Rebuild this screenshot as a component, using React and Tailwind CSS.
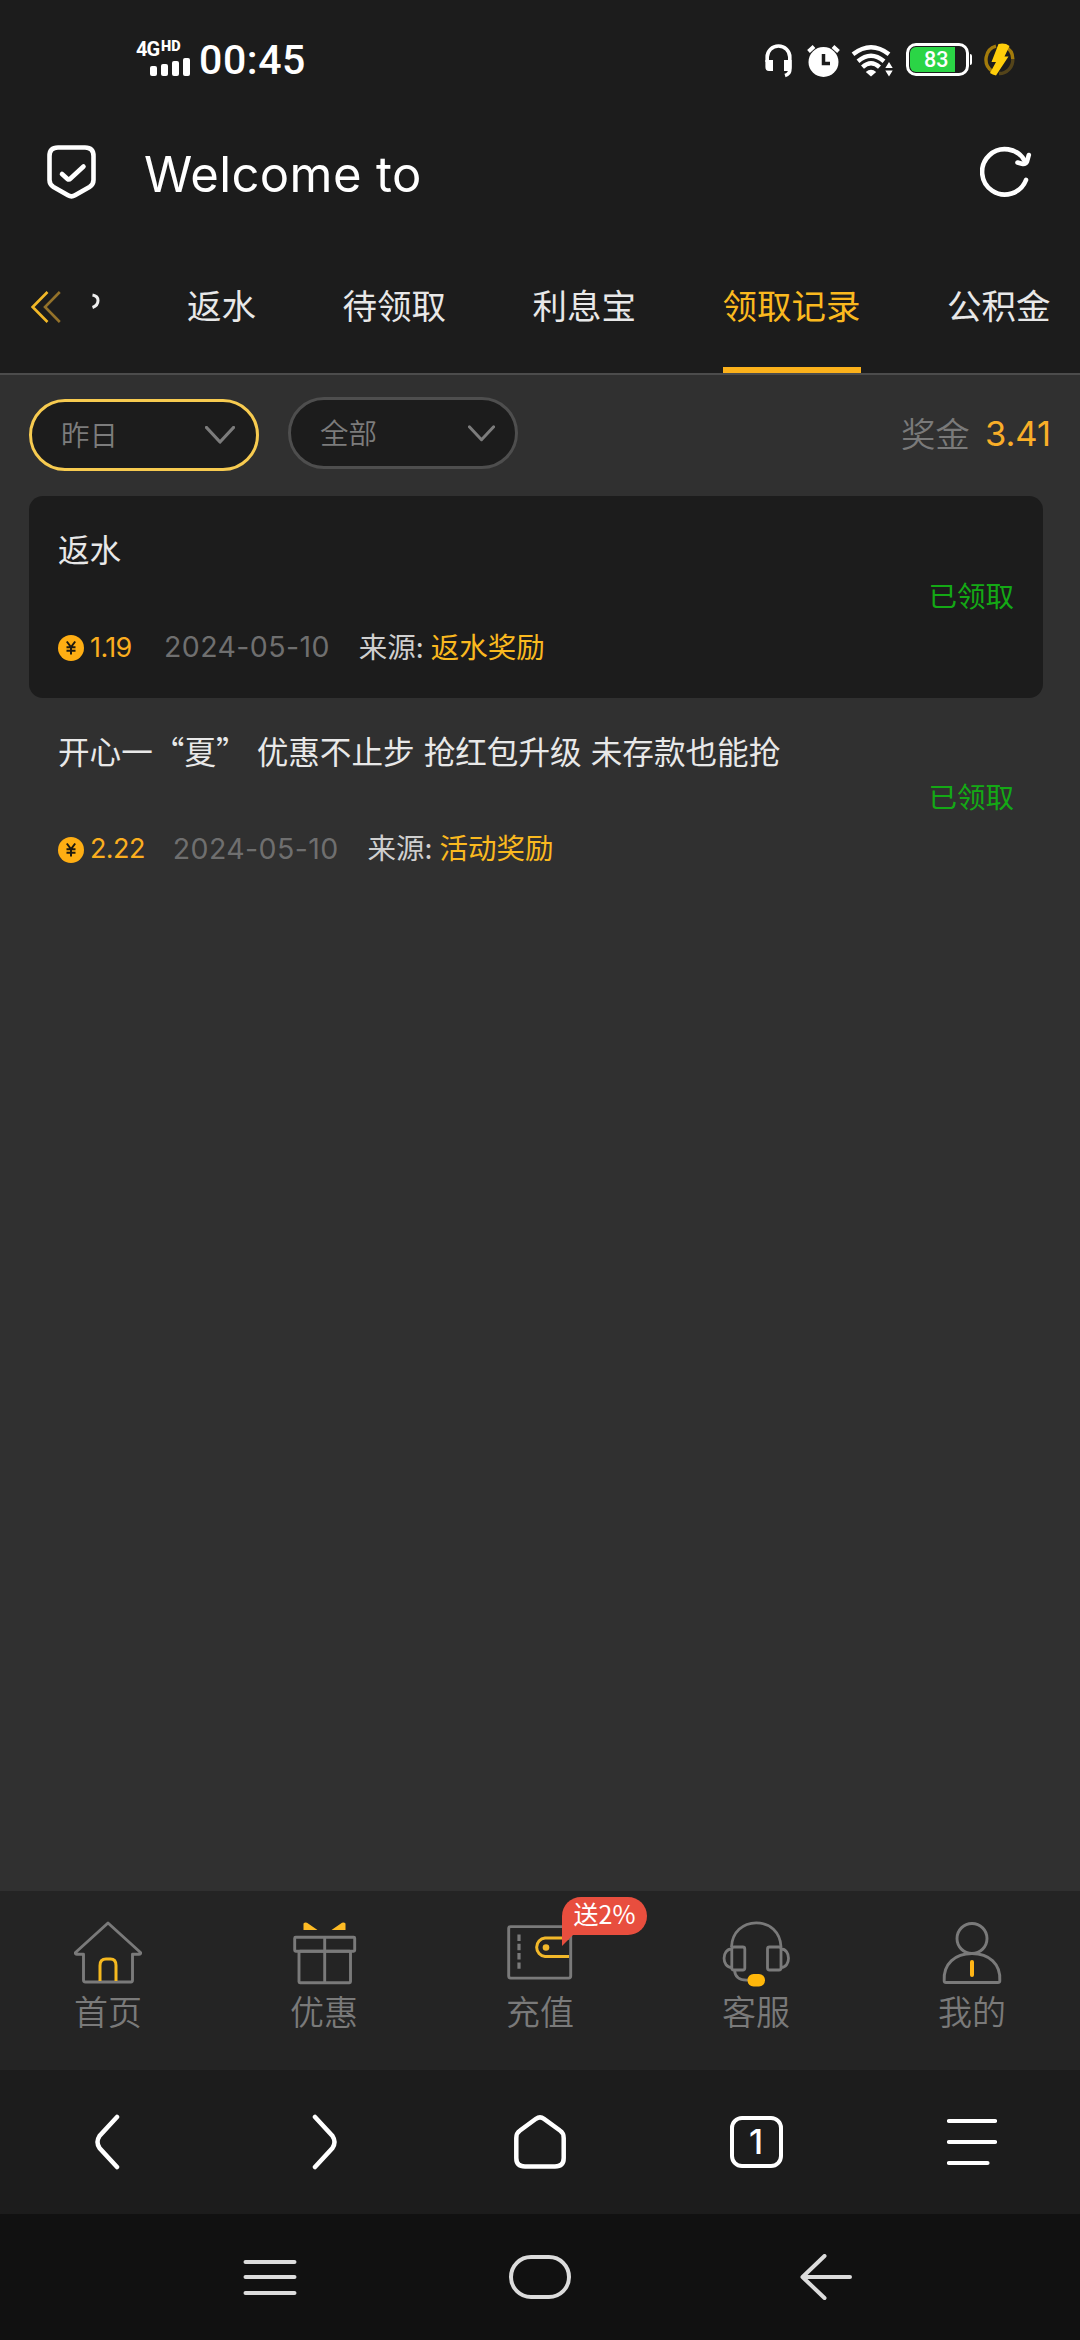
import React, { useState } from 'react';

const styles = {
  cjk: "font-['Noto_Sans_CJK_SC','Noto_Sans',sans-serif]",
  latin: "font-['Inter','Noto_Sans_CJK_SC',sans-serif]",
  status: "font-['Roboto','Noto_Sans_CJK_SC',sans-serif]",
};

const abas = ['返水', '待领取', '利息宝', '领取记录', '公积金'];

const registros = [
  { id: 1, titulo: '返水', valor: '1.19', data: '2024-05-10', origem: '返水奖励', status: '已领取' },
  { id: 2, titulo: '开心一“夏” 优惠不止步 抢红包升级 未存款也能抢', valor: '2.22', data: '2024-05-10', origem: '活动奖励', status: '已领取' },
];

function StatusBar() {
  return (
    <div className={`flex h-[120px] justify-between pl-[136px] pr-[65px] text-white ${styles.status}`}>
      <div className="flex pt-[42px]">
        <div className="w-[54px]">
          <div className="flex h-4 items-start font-bold">
            <span className="w-[25px] text-[20px] leading-[15px] tracking-[-1px]">4G</span>
            <span className="text-[14.5px] leading-[10px] font-black">HD</span>
          </div>
          <div className="flex items-end gap-1 pl-[14px]">
            <span className="h-[10px] w-[7px] rounded-xs bg-white" />
            <span className="h-[12px] w-[7px] rounded-xs bg-white" />
            <span className="h-[15px] w-[7px] rounded-xs bg-white" />
            <span className="h-[18px] w-[7px] rounded-xs bg-white" />
          </div>
        </div>
        <span className="pl-[9px] text-[41px] leading-[37px] font-medium tracking-[0.6px]">00:45</span>
      </div>

      <div className="flex items-start pt-[43px]">
        <svg className="mt-px h-[34px] w-[27px]" viewBox="0 0 27 34" fill="none">
          <path d="M2.2 18V13A11.3 11 0 0 1 24.8 13V26Q24.8 30 20 31.5" stroke="#fff" strokeWidth="3.6" />
          <path d="M.4 16H8V27H4Q.4 27 .4 23Z M19 16h7.6v7q0 4-3.6 4h-4z" fill="#fff" />
        </svg>
        <svg className="mt-[2px] ml-[15px] h-[32px] w-[33px]" viewBox="0 0 33 32" fill="none">
          <circle cx="16.5" cy="17" r="15" fill="#fff" />
          <path d="M1.5 6.5 7 1.5M31.5 6.5 26 1.5" stroke="#fff" strokeWidth="4" />
          <path d="M16.5 9v9.5h6.5" stroke="#1c1c1c" strokeWidth="3.5" />
        </svg>
        <svg className="mt-px ml-[11px] h-[33px] w-[43px]" viewBox="0 0 43 33" fill="none">
          <g stroke="#fff" strokeWidth="4.4">
            <path d="M2 10.2Q20 -3.8 38 10.2" />
            <path d="M7 17.2Q20 6.2 33 17.2" />
            <path d="M11.5 23.2Q20 15.4 28.5 23.2" />
          </g>
          <path d="M14.8 28Q20 23.6 25.2 28L20 32.4Z" fill="#fff" />
          <path d="M34.3 24 38 18l3.7 6zM34.3 26.5h7.4L38 32.5z" fill="#fff" />
        </svg>
        <div className="ml-3 flex items-center">
          <div className="flex h-[33px] w-[63px] rounded-[10px] border-[3px] border-white p-px">
            <div className="flex w-[45px] items-center rounded-l-[6px] bg-[#2bd546] pl-[14px] text-[21.5px] leading-none font-medium">83</div>
          </div>
          <span className="ml-px h-[11px] w-[2px] rounded-r-xs bg-white" />
        </div>
        <svg className="ml-3 h-[33px] w-[31px]" viewBox="0 0 31 33" fill="none">
          <path d="M12 3.2A13.5 13.8 0 0 0 8 28M21 3.5A13.5 13.8 0 0 1 28.8 16" stroke="#a37b0b" strokeWidth="3.4" />
          <path d="M28.8 16A13.5 13.8 0 0 1 15 30.5" stroke="#54441a" strokeWidth="3.4" />
          <path d="M14.5 1Q21 -.5 25.5 3L20.5 13.5H24.5L12 32.5Q8.5 31.8 6 30L12 19H7.5Z" fill="#ffce0a" />
        </svg>
      </div>
    </div>
  );
}

function Header() {
  return (
    <div className="flex h-[104px] items-center pl-[47px] pr-[48px]">
      <svg className="h-[54px] w-[49px]" viewBox="0 0 49 54" fill="none" stroke="#fff" strokeWidth="4.6" strokeLinecap="round" strokeLinejoin="round">
        <path d="M11 2.5H38Q46.5 2.5 46.5 11V35Q46.5 39.5 42.5 42L28 50.3Q24.5 52.4 21 50.3L6.5 42Q2.5 39.5 2.5 35V11Q2.5 2.5 11 2.5Z" />
        <path d="M15 29 20.5 34Q22 35 23.5 33.5L36.5 21.5" />
      </svg>
      <h1 className={`ml-12 flex-1 pt-[4px] text-[49px] leading-none font-normal tracking-[0.4px] text-white ${styles.latin}`}>Welcome to</h1>
      <svg className="mb-[2px] h-[52px] w-[52px]" viewBox="0 0 52 52" fill="none" stroke="#fff" strokeWidth="4.6" strokeLinecap="round" strokeLinejoin="round">
        <path d="M46 35A22.7 22.7 0 1 1 44.5 15.5" />
        <path d="M48.8 10 47 16.5Q45.5 19.5 42 18.8L37.5 17.5" />
      </svg>
    </div>
  );
}

function Abas({ ativa, onChange }) {
  return (
    <div className="flex h-[151px] items-stretch border-b-2 border-[#4c4c4c] pl-[31px]">
      <svg className="mt-[67px] h-[32px] w-[30px] shrink-0" viewBox="0 0 30 32" fill="none" strokeWidth="2.6">
        <path d="M16.5 1 1.7 16 16.5 31" stroke="#f2b827" />
        <path d="M28.8 1 14 16 28.8 31" stroke="#94722a" />
      </svg>
      {/* fim da aba anterior, cortada pela rolagem */}
      <svg className="mt-[69px] ml-[31px] h-[17px] w-[8px] shrink-0" viewBox="0 0 8 17" fill="none">
        <path d="M.5 2Q6 3 6 7.5Q6 12.5 .5 14.5" stroke="#eee" strokeWidth="3" />
      </svg>
      <div className="ml-[87px] flex gap-[86.5px]">
        {abas.map(aba => (
          <button
            key={aba}
            onClick={() => onChange(aba)}
            className={`h-full shrink-0 border-b-[6px] pt-[17px] text-[34.5px] leading-none whitespace-nowrap ${
              ativa === aba ? 'border-[#fbb11b] text-[#fab91f]' : 'border-transparent text-[#e8e8e8]'
            }`}
          >
            {aba}
          </button>
        ))}
      </div>
    </div>
  );
}

function Filtro({ texto, ativo }) {
  return (
    <button
      className={`flex h-[72px] w-[230px] items-center justify-between rounded-full border-[3px] bg-[#1c1c1c] text-[28.5px] leading-none text-[#7c7c7c] ${
        ativo ? 'mt-[2px] border-[#f7cb50] pr-[21px] pl-[29px]' : 'border-[#4e4e4e] pr-[20px] pl-[29px]'
      }`}
    >
      <span className="pb-[2px] font-[350]">{texto}</span>
      <svg className={ativo ? 'h-[18px] w-[30px]' : 'h-[17px] w-[27px]'} viewBox="0 0 30 18" fill="none">
        <path d="M1.5 1.5 15 16 28.5 1.5" stroke="#7c7c7c" strokeWidth="3.3" strokeLinejoin="round" strokeLinecap="round" />
      </svg>
    </button>
  );
}

function Registro({ r, destaque }) {
  return (
    <div className={`flex h-[201.5px] items-center justify-between rounded-[14px] pr-[29px] pl-[29px] ${destaque ? 'bg-[#1c1c1c]' : ''}`}>
      <div className="h-full pt-[33px]">
        <p className="h-[38px] text-[31.6px] leading-[38px] whitespace-nowrap text-[#e8e8e8] [word-spacing:2px]">{r.titulo}</p>
        <div className="mt-[63px] flex h-9 items-center text-[28.5px] leading-none whitespace-nowrap">
          <svg className="h-[26px] w-[26px]" viewBox="0 0 26 26" fill="none">
            <circle cx="13" cy="13" r="13" fill="#ffae13" />
            <path d="M8.8 6.5 13 12 17.2 6.5M13 12V19.5M8.5 12.2H17.5M8.5 15.8H17.5" stroke="#1f1a10" strokeWidth="2" />
          </svg>
          <span className={`ml-[6px] min-w-[46px] pb-[2px] text-[27px] tracking-[-0.6px] text-[#fbae1f] ${styles.latin}`}>{r.valor}</span>
          <span className={`ml-[28px] pb-px text-[28.5px] tracking-[0.4px] text-[#6f6f6f] ${styles.latin}`}>{r.data}</span>
          <span className="ml-[29px] pb-[4px] text-[#cfcfcf]">来源:</span>
          <span className="ml-[7px] pb-[4px] text-[#fab91f]">{r.origem}</span>
        </div>
      </div>
      <span className="pb-[4px] text-[28.5px] leading-none text-[#14a915]">{r.status}</span>
    </div>
  );
}

function IconeInicio() {
  return (
    <svg className="h-[66px] w-[68px]" viewBox="0 0 68 66" fill="none" strokeWidth="2.9" strokeLinejoin="round">
      <path d="M34 2 1.5 31.5Q1 33.2 3 33.2H9.5V59Q9.5 61 11.5 61H57Q58.5 61 58.5 59V33.2H65Q67 33.2 66.5 31.5Z" stroke="#7a7a7a" />
      <path d="M26 60V44.5Q26 38 32 38H36.5Q42 38 42 44.5V60" stroke="#f6b91f" strokeWidth="3" />
    </svg>
  );
}

function IconePromo() {
  return (
    <svg className="ml-[3px] h-[66px] w-[68px]" viewBox="0 0 68 66" fill="none">
      <path d="M11.5 2.5Q13 .8 15 1.8L25.5 9H11.5ZM53.5 2.5Q52 .8 50 1.8L39.5 9H53.5Z" fill="#fdbb24" />
      <g stroke="#7a7a7a" strokeWidth="2.9">
        <rect x="2.7" y="16.3" width="60" height="14" rx="1" />
        <rect x="7" y="30.3" width="51.5" height="31.5" rx="1" />
        <path d="M32.7 16.3V61.8" />
      </g>
    </svg>
  );
}

function IconeRecarga() {
  return (
    <svg className="h-[66px] w-[68px]" viewBox="0 0 68 66" fill="none">
      <rect x="2.7" y="5.6" width="62" height="51.5" rx="2" stroke="#7a7a7a" strokeWidth="2.9" />
      <path d="M13 13.500V48" stroke="#7a7a7a" strokeWidth="3.2" strokeDasharray="6.4 2.9" />
      <path d="M63 17H39A9.3 9.3 0 0 0 39 35.500H63" stroke="#f2b82a" strokeWidth="3" />
      <circle cx="40" cy="26.5" r="3.3" fill="#f2b82a" />
    </svg>
  );
}

function IconeSuporte() {
  return (
    <svg className="h-[66px] w-[68px]" viewBox="0 0 68 66" fill="none" stroke="#7a7a7a" strokeWidth="2.8">
      <path d="M9.5 26C10 11 21 1.8 34.3 1.8S58.5 11 59 26" />
      <rect x="9.8" y="26" width="13" height="23" rx="2" />
      <rect x="45.5" y="26" width="13.5" height="23" rx="2" />
      <path d="M9.8 28C-.5 28 -.5 46.5 9.8 46.5M59 28C69 28 69 46.5 59 46.5M12.5 49C13 56 17 59.5 26 59" />
      <rect x="25.5" y="53" width="17.5" height="12.5" rx="6" fill="#ffb70a" stroke="none" />
    </svg>
  );
}

function IconePerfil() {
  return (
    <svg className="h-[66px] w-[68px]" viewBox="0 0 68 66" fill="none" stroke="#7a7a7a" strokeWidth="2.9">
      <circle cx="34" cy="17.5" r="15" />
      <path d="M6.2 60C5 43 17 32.5 34 32.5S63 43 61.8 60Q61.6 61.5 60 61.5H8Q6.3 61.5 6.2 60Z" />
      <path d="M34 41V54" stroke="#ffb516" strokeWidth="4" strokeLinecap="round" />
    </svg>
  );
}

const menu = [
  { nome: '首页', Icone: IconeInicio },
  { nome: '优惠', Icone: IconePromo },
  { nome: '充值', Icone: IconeRecarga, selo: '送2%' },
  { nome: '客服', Icone: IconeSuporte },
  { nome: '我的', Icone: IconePerfil },
];

function MenuInferior() {
  return (
    <nav className="grid h-[179px] grid-cols-5 bg-[#242424]">
      {menu.map(({ nome, Icone, selo }) => (
        <div key={nome} className="relative flex flex-col items-center pt-[30px]">
          <Icone />
          <span className="mt-[6px] text-[34px] leading-[35px] font-[350] text-[#7a7a7a]">{nome}</span>
          {selo && (
            <div className="absolute top-[6px] left-[130px]">
              <div className="flex h-[38px] w-[85px] items-center justify-center rounded-[19px] rounded-bl-none bg-[#e84e3e] pb-[5px] text-[25px] leading-none whitespace-nowrap text-white">{selo}</div>
              <svg className="h-[11px] w-[14px]" viewBox="0 0 14 11"><path d="M0 0H11L0 11Z" fill="#e84e3e" /></svg>
            </div>
          )}
        </div>
      ))}
    </nav>
  );
}

function BarraNavegador() {
  return (
    <div className="grid h-[144px] grid-cols-5 items-center justify-items-center bg-[#1c1c1c]">
      <svg className="h-[56px] w-[28px]" viewBox="0 0 28 56" fill="none" stroke="#fff" strokeWidth="4.5" strokeLinecap="round">
        <path d="M23 3 5.5 22Q1.500 28 5.5 34L23 53" />
      </svg>
      <svg className="h-[56px] w-[28px]" viewBox="0 0 28 56" fill="none" stroke="#fff" strokeWidth="4.5" strokeLinecap="round">
        <path d="M5 3 22.5 22Q26.500 28 22.5 34L5 53" />
      </svg>
      <svg className="h-[54px] w-[52px]" viewBox="0 0 52 54" fill="none" stroke="#fff" strokeWidth="4.5" strokeLinejoin="round">
        <path d="M22 3.8Q26 1 30 3.8L46 15.5Q49.7 18 49.7 23V43Q49.7 51.5 41 51.5H11Q2.3 51.5 2.3 43V23Q2.3 18 6 15.5Z" />
      </svg>
      <div className={`flex h-[52px] w-[53px] items-center justify-center rounded-[12px] border-[4.5px] border-white text-[34px] leading-none font-medium text-white ${styles.latin}`}>1</div>
      <svg className="h-[48px] w-[50px]" viewBox="0 0 50 48" fill="none" stroke="#fff" strokeWidth="4.2" strokeLinecap="round">
        <path d="M2 3H48M2 24H48M2 45H40.5" />
      </svg>
    </div>
  );
}

function BarraSistema() {
  return (
    <div className="grid h-[126px] grid-cols-3 items-center justify-items-center bg-[#111111] px-[135px]">
      <svg className="h-[36px] w-[54px]" viewBox="0 0 54 36" fill="none" stroke="#dcdcdc" strokeWidth="4" strokeLinecap="round">
        <path d="M2.500 3H51.500M2.500 18H51.500M2.500 34H51.500" />
      </svg>
      <div className="h-[44px] w-[62px] rounded-[22px] border-4 border-[#dcdcdc]" />
      <svg className="ml-[31px] h-[46px] w-[52px]" viewBox="0 0 52 46" fill="none" stroke="#dcdcdc" strokeWidth="4" strokeLinecap="round" strokeLinejoin="round">
        <path d="M50 23H2.500M24.500 2 2.500 23 24.500 44" />
      </svg>
    </div>
  );
}

export default function App() {
  const [aba, setAba] = useState('领取记录');

  return (
    <div className={`flex h-[2340px] w-[1080px] flex-col overflow-hidden bg-[#303030] ${styles.cjk}`}>
      <header className="bg-[#1c1c1c]">
        <StatusBar />
        <Header />
        <Abas ativa={aba} onChange={setAba} />
      </header>

      <main className="flex-1">
        <div className="flex h-[121px] items-start gap-[29px] pt-[22px] pr-[29px] pl-[29px]">
          <Filtro texto="昨日" ativo />
          <Filtro texto="全部" />
          <div className="flex h-[74px] flex-1 items-center justify-end gap-[15px] leading-none">
            <span className="pb-[4px] text-[34.5px] font-[350] text-[#7a7a7a]">奖金</span>
            <span className={`text-[34.5px] text-[#f9ae28] ${styles.latin}`}>3.41</span>
          </div>
        </div>
        <div className="pr-[37px] pl-[29px]">
          {registros.map((r, i) => (
            <Registro key={r.id} r={r} destaque={i % 2 === 0} />
          ))}
        </div>
      </main>

      <MenuInferior />
      <BarraNavegador />
      <BarraSistema />
    </div>
  );
}
